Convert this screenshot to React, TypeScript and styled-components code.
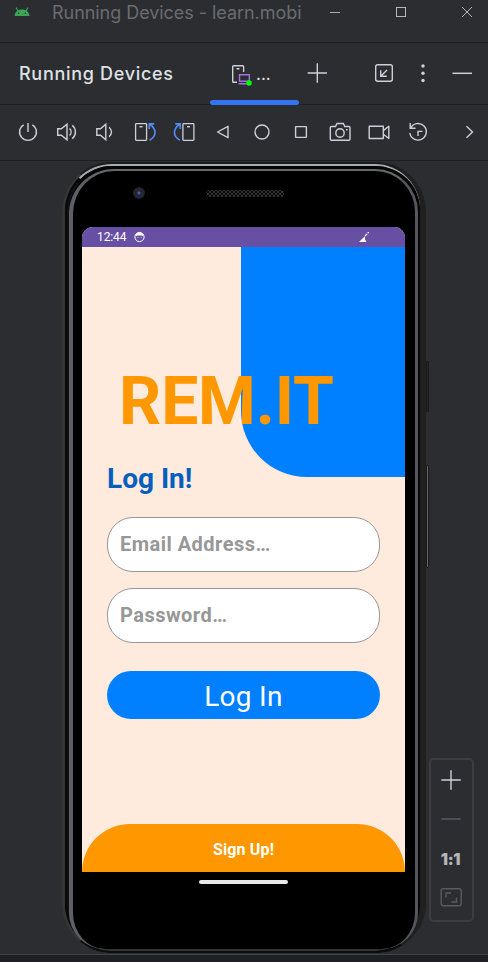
import React from 'react';
import styled, { createGlobalStyle } from 'styled-components';

const GlobalStyle = createGlobalStyle`
  * { box-sizing: border-box; }
  body { margin: 0; background: #2b2d30; overflow: hidden; }
  button { font: inherit; border: 0; padding: 0; background: none; color: inherit; }
`;

const Window = styled.div`
  width: 488px;
  height: 962px;
  display: flex;
  flex-direction: column;
  background: #2b2d30;
  color: #dfe1e5;
  font-family: Inter, sans-serif;
  overflow: hidden;
`;

const TitleBar = styled.header`
  height: 43px;
  flex: none;
  display: flex;
  align-items: flex-start;
  padding-left: 12px;
  border-bottom: 1px solid #1e1f22;
`;

const WindowTitle = styled.div`
  width: 250px;
  margin-left: 20px;
  font-size: 18px;
  letter-spacing: -0.05px;
  line-height: 26px;
  color: #6a6c71;
  white-space: nowrap;
  overflow: hidden;
`;

const WindowControls = styled.div`
  display: flex;
  margin-left: 21px;
  gap: 42px;
`;

const TabBar = styled.div`
  height: 62px;
  flex: none;
  display: flex;
  padding-left: 19px;
  border-bottom: 1px solid #1e1f22;
`;

const PanelTitle = styled.div`
  width: 191px;
  line-height: 61px;
  font-size: 18px;
  font-weight: 550;
  letter-spacing: 0.7px;
  white-space: nowrap;
`;

const DeviceTab = styled.div`
  width: 89px;
  height: 62px;
  display: flex;
  align-items: center;
  padding-left: 19px;
  gap: 3px;
  position: relative;
  font-size: 17px;
  &::after {
    content: '';
    position: absolute;
    left: 0;
    right: 0;
    bottom: 0;
    height: 5px;
    border-radius: 2.5px;
    background: #3574f0;
  }
`;

const TabActions = styled.div<{ $start: number; $gap: number }>`
  display: flex;
  align-items: center;
  height: 60px;
  margin-left: ${p => p.$start}px;
  gap: ${p => p.$gap}px;
`;

const Toolbar = styled.div`
  height: 56px;
  flex: none;
  display: flex;
  align-items: center;
  padding: 0 0 1px 8.5px;
  border-bottom: 1px solid #1e1f22;
`;

const Tool = styled.button<{ $last?: boolean }>`
  width: 39px;
  height: 38px;
  flex: none;
  display: flex;
  align-items: center;
  justify-content: center;
  margin-left: ${p => (p.$last ? '12px' : '0')};
`;

const Glyph = styled.svg`
  display: block;
  flex: none;
  fill: none;
  stroke: #ced0d6;
  stroke-width: 1.4;
`;

const Stage = styled.main`
  height: 793px;
  flex: none;
  display: flex;
  align-items: flex-start;
  padding: 1px 0 0 62px;
`;

const PhoneShell = styled.div`
  position: relative;
  width: 364px;
  height: 791px;
  flex: none;
  border-style: solid;
  border-width: 2px 6px 2px 3px;
  border-color: #1b1c1d #202021 #0c0c0c #363636;
  border-radius: 50px;
  background: #000;
`;

const Rim = styled.div`
  height: 100%;
  border-style: solid;
  border-width: 2px 0 2px 2px;
  border-color: #a9acae #202021 #333436 #0a0a0a;
  border-radius: 47px 45px 45px 47px;
`;

const RimGap = styled.div`
  height: 100%;
  border-style: solid;
  border-width: 3px 2px 0 2px;
  border-color: #050505 #050505 #000 #111113;
  border-radius: 45px;
`;

const Glass = styled.div`
  height: 100%;
  display: flex;
  flex-direction: column;
  border-style: solid;
  border-width: 2px 3px 0 4px;
  border-color: #66686e #56575d #000 #5d6067;
  border-radius: 45px 43px 36px 36px;
  background: #000;
  padding: 0 10px 0 9px;
`;

const SideButton = styled.i<{ $top: number; $height: number; $tone: string }>`
  position: absolute;
  right: -9px;
  top: ${p => p.$top}px;
  width: 3px;
  height: ${p => p.$height}px;
  border: 1px solid #17181a;
  border-radius: 1px;
  background: ${p => p.$tone};
`;

const TopBezel = styled.div`
  height: 56px;
  display: flex;
  padding: 16px 0 0 51px;
  gap: 61px;
`;

const Camera = styled.div`
  width: 12px;
  height: 12px;
  border-radius: 50%;
  background: radial-gradient(circle, #4a5f9e 0 1px, #1c2444 2px 2.5px, #26272a 3.5px 5px, #1c1c1e 6px);
`;

const Speaker = styled.div`
  width: 78px;
  height: 7px;
  margin-top: 3px;
  border-radius: 4px;
  background:
    radial-gradient(circle, #070707 0.8px, transparent 1.1px) 0 0 / 4px 4px,
    radial-gradient(circle, #070707 0.8px, transparent 1.1px) 2px 2px / 4px 4px,
    #343434;
`;

const Screen = styled.div`
  position: relative;
  width: 323px;
  height: 645px;
  display: flex;
  flex-direction: column;
  border-radius: 11px 11px 0 0;
  overflow: hidden;
  background: #ffebdd;
  font-family: Roboto, sans-serif;
`;

const StatusBar = styled.div`
  height: 20px;
  flex: none;
  display: flex;
  align-items: center;
  padding: 0 35px 0 15px;
  background: #6750a4;
  color: #fff;
  font-size: 12px;
  letter-spacing: -0.1px;
  line-height: 20px;
  svg:first-of-type { margin-left: 7px; }
  svg:last-of-type { margin-left: auto; }
`;

const CornerShape = styled.div`
  position: absolute;
  top: 20px;
  right: 0;
  width: 164.5px;
  height: 230px;
  background: #0080ff;
  border-bottom-left-radius: 66px;
`;

const Form = styled.form`
  position: relative;
  flex: 1;
  display: flex;
  flex-direction: column;
  padding: 116px 25px 0;
`;

const Brand = styled.h1`
  margin: 0 0 0 12px;
  font-size: 66px;
  line-height: 78px;
  font-weight: 700;
  letter-spacing: -0.15px;
  color: #ff9800;
  white-space: nowrap;
`;

const Heading = styled.h2`
  margin: 21px 0 0;
  font-size: 28px;
  line-height: 34px;
  font-weight: 700;
  color: #045fbd;
`;

const Field = styled.div<{ $gap: number }>`
  height: 55px;
  margin-top: ${p => p.$gap}px;
  padding-left: 12px;
  border: 1px solid #989696;
  border-radius: 26px;
  background: #fff;
  color: #979797;
  font-size: 20px;
  font-weight: 700;
  line-height: 53px;
  letter-spacing: 0.47px;
`;

const Submit = styled.button`
  && {
    height: 48px;
    margin-top: 28px;
    border-radius: 24px;
    background: #0080ff;
    color: #fff;
    font-size: 28px;
    line-height: 52px;
    letter-spacing: 0.3px;
  }
`;

const SignUp = styled.button`
  && {
    position: relative;
    height: 48px;
    flex: none;
    border-radius: 48px 48px 0 0;
    background: #ff9800;
    color: #fff;
    font-size: 16px;
    font-weight: 700;
    line-height: 51px;
    letter-spacing: 0.15px;
  }
`;

const HomeBar = styled.div`
  width: 89px;
  height: 4px;
  margin: 8px 0 0 117px;
  border-radius: 2px;
  background: #e9e9e7;
`;

const ZoomPanel = styled.aside`
  width: 45px;
  height: 164px;
  flex: none;
  margin: 596px 0 0 3px;
  display: flex;
  flex-direction: column;
  align-items: center;
  padding: 8px 2px 0 0;
  gap: 15px;
  border: 2px solid #3c3d3e;
  border-radius: 5px;
`;

const ZoomRatio = styled.span`
  height: 24px;
  line-height: 26px;
  font-size: 16px;
  font-weight: 900;
  letter-spacing: -0.3px;
  color: #b4b5b8;
`;

const Footer = styled.footer`
  flex: 1;
  border-top: 1px solid #424345;
  background: #1f2023;
`;

const Icon = ({ children, size = 24 }: { children: React.ReactNode; size?: number }) => (
  <Glyph width={size} height={size} viewBox={`0 0 ${size} ${size}`}>{children}</Glyph>
);

const blue = '#548af7';

const RotateLeft = () => (
  <>
    <rect x="2.6" y="3.7" width="11" height="16.600" rx="0.800" strokeWidth="1.300" />
    <path d="M6.500 6.700h3" />
    <path stroke={blue} strokeWidth="1.600" d="M21.300 3.900h-5V9M16.500 4.200c7.200 4.300 7.500 12.100.1 16" />
  </>
);

const toolIcons: React.ReactNode[] = [
  <path d="M12 3v9M7.600 4.800A8.400 8.400 0 1 0 16.400 4.800" />,
  <path d="M2.700 8.800h3.600L12 4.200v15.600L6.300 15.200H2.700zM14.600 8.500c2 2 2 5 0 7M17.200 5.200c4.300 3.600 4.300 10 0 13.600" />,
  <path d="M2.800 8.800h3.600l5.400-4.600v15.600L6.400 15.200H2.800zM15 7.300c3.300 2.600 3.300 6.800 0 9.400" />,
  <RotateLeft />,
  <g transform="matrix(-1 0 0 1 24.500 0)"><RotateLeft /></g>,
  <path d="M17 6.300v11.400L6.500 12z" strokeLinejoin="round" />,
  <circle cx="12" cy="12" r="7" />,
  <rect x="6.600" y="6.600" width="10.800" height="10.800" rx="0.400" />,
  <>
    <path d="M3.500 6.500h4l1.500-3h6.300l1.500 3h4q1.200 0 1.200 1.200v11.400q0 1.200-1.200 1.200H3.500q-1.200 0-1.200-1.200V7.700q0-1.200 1.200-1.200z" />
    <circle cx="12" cy="13" r="4.200" />
    <path d="M18 9.800h1.600" />
  </>,
  <path d="M2.200 6.200h14.100v12.300H2.200zM16.300 10.600l5.500-4.300v12.200l-5.500-4.200" strokeLinejoin="round" />,
  <path d="M4.200 3v5.300h5.300M4.500 8.200A8.300 8.300 0 1 1 3.800 13M12 16v-4.600h4.500" />,
];

const App = () => (
  <>
    <GlobalStyle />
    <Window>
      <TitleBar>
        <Icon size={20}>
          <g stroke="none" fill="#3aa757">
            <path d="M2.600 16c.3-3.800 3-6.400 7.400-6.400s7.100 2.600 7.400 6.400z" />
            <path stroke="#3aa757" strokeWidth="1.100" d="M4 7.600l2.300 3.600M16 7.600l-2.300 3.600" />
            <circle cx="6.600" cy="13.300" r=".8" fill="#2b2d30" />
            <circle cx="13.400" cy="13.300" r=".8" fill="#2b2d30" />
          </g>
        </Icon>
        <WindowTitle>Running Devices - learn.mobil</WindowTitle>
        <WindowControls>
          <Icon><path strokeWidth="1" d="M7 12.500h10" stroke="#a9abaf" /></Icon>
          <Icon><rect strokeWidth="1" x="7.500" y="7.500" width="9" height="9" stroke="#b4b6ba" /></Icon>
          <Icon><path strokeWidth="1" d="M7 7l10 10M17 7L7 17" stroke="#b4b6ba" /></Icon>
        </WindowControls>
      </TitleBar>

      <TabBar>
        <PanelTitle>Running Devices</PanelTitle>
        <DeviceTab>
          <Icon>
            <path d="M8 20.300H4.500q-.8 0-.8-.8V4.500q0-.8.8-.8h9.300q.8 0 .8.800V10M7.500 6.700h3" />
            <path stroke="#a571e6" d="M10.500 12.700h9.800v6.600h-9.800zM9.500 21.800h8" />
            <circle cx="20" cy="21" r="2.800" stroke="none" fill="#0f0" />
          </Icon>
          ...
        </DeviceTab>
        <TabActions $start={6} $gap={0}>
          <Icon><path d="M12.300 2.300v19.400M2.600 12h19.400" strokeWidth="1.400" /></Icon>
        </TabActions>
        <TabActions $start={43} $gap={15}>
          <Icon>
            <rect x="3.700" y="3.700" width="16.600" height="16.600" rx="2" />
            <path d="M15 9l-6 6M8.700 9.300v6h6" />
          </Icon>
          <Icon>
            <g stroke="none" fill="#ced0d6">
              <circle cx="12" cy="5" r="1.700" />
              <circle cx="12" cy="12.200" r="1.700" />
              <circle cx="12" cy="19.500" r="1.700" />
            </g>
          </Icon>
          <Icon><path d="M2.500 12.300h19.500" strokeWidth="1.500" /></Icon>
        </TabActions>
      </TabBar>

      <Toolbar>
        {toolIcons.map((icon, i) => <Tool key={i}><Icon>{icon}</Icon></Tool>)}
        <Tool $last><Icon><path d="M9.500 6.300l6 5.700-6 5.700" /></Icon></Tool>
      </Toolbar>

      <Stage>
        <PhoneShell>
          <SideButton $top={197} $height={51} $tone="#242526" />
          <SideButton $top={301} $height={103} $tone="#66686a" />
          <Rim>
            <RimGap>
              <Glass>
                <TopBezel>
                  <Camera />
                  <Speaker />
                </TopBezel>
                <Screen>
                  <CornerShape />
                  <StatusBar>
                    12:44
                    <Glyph width="12" height="12" viewBox="0 0 12 12">
                      <circle cx="6.500" cy="6" r="4.600" stroke="#fff" strokeWidth="1" />
                      <path d="M2.500 5.200C3 2.500 4.500 1.600 6.500 1.600s3.500.9 4 3.600L8.500 4.400h-4z" fill="#fff" stroke="none" />
                      <path d="M4.500 6.500h.8M7.700 6.500h.8" stroke="#fff" strokeWidth=".8" />
                    </Glyph>
                    <Glyph width="12" height="12" viewBox="0 0 12 12">
                      <path d="M1 11l6-6v3.500L8.500 11z" fill="#fff" stroke="none" />
                      <path d="M7 5l2-2M9.500 1.700h1.500" stroke="#fff" strokeWidth="1.200" />
                    </Glyph>
                  </StatusBar>
                  <Form>
                    <Brand>REM.IT</Brand>
                    <Heading>Log In!</Heading>
                    <Field $gap={21}>Email Address…</Field>
                    <Field $gap={16}>Password…</Field>
                    <Submit type="button">Log In</Submit>
                  </Form>
                  <SignUp type="button">Sign Up!</SignUp>
                </Screen>
                <HomeBar />
              </Glass>
            </RimGap>
          </Rim>
        </PhoneShell>
        <ZoomPanel>
          <Icon><path d="M12 2.300v19.400M2.300 12h19.400" strokeWidth="1.400" /></Icon>
          <Icon><path d="M2.300 12h19.400" stroke="#5a5d63" /></Icon>
          <ZoomRatio>1:1</ZoomRatio>
          <Icon>
            <g stroke="#5a5b5e">
              <rect x="2.200" y="3.700" width="20" height="17" rx="2" />
              <path d="M7 12.500V8h5M17.500 12.500V17h-5" />
            </g>
          </Icon>
        </ZoomPanel>
      </Stage>
      <Footer />
    </Window>
  </>
);

export default App;
